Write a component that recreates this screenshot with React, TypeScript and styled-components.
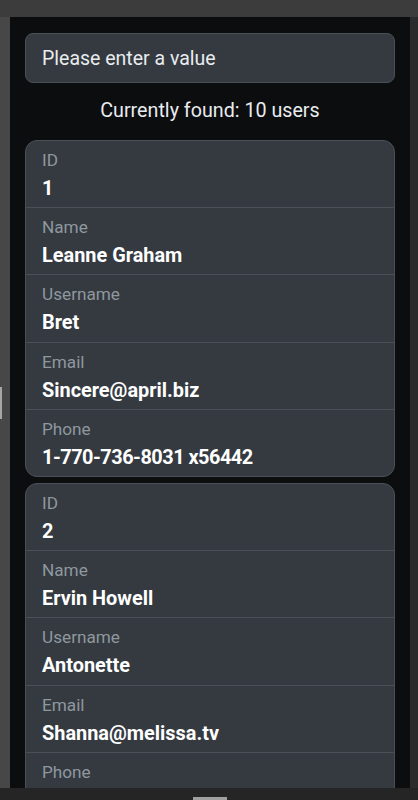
import React from "react";
import styled, { createGlobalStyle } from "styled-components";

const Global = createGlobalStyle`
  html, body { margin: 0; padding: 0; background: #252525; }
  body { font-family: Roboto, "Liberation Sans", sans-serif; }
  * { box-sizing: border-box; }
`;

const Frame = styled.div`
  width: 418px;
  height: 800px;
  display: grid;
  grid-template-rows: 17px 1fr 12px;
  overflow: hidden;
`;

const TopBar = styled.div`
  background: #3c3c3c;
`;

const Middle = styled.div`
  display: grid;
  grid-template-columns: 10px 1fr 8px;
  min-height: 0;
`;

const LeftStrip = styled.div`
  background: #474747;
  position: relative;
`;

const LeftThumb = styled.div`
  position: absolute;
  left: 0;
  top: 370px;
  width: 2px;
  height: 32px;
  background: #a6a6a6;
`;

const RightStrip = styled.div`
  background: #2b2b2b;
`;

const BottomBar = styled.div`
  background: #252525;
  position: relative;
`;

const BottomThumb = styled.div`
  position: absolute;
  left: 193px;
  bottom: 0;
  width: 34px;
  height: 3px;
  background: #a0a0a0;
`;

const Main = styled.main`
  background: #0c0d0f;
  padding: 16px 15px 0;
  overflow: hidden;
  min-height: 0;
`;

const SearchInput = styled.input`
  display: block;
  width: 100%;
  height: 50px;
  padding: 0 16px;
  background: #343a40;
  border: 1px solid #495057;
  border-radius: 8px;
  color: #f1f3f5;
  font-family: Roboto, "Liberation Sans", sans-serif;
  font-size: 19.5px;
  outline: none;
  &::placeholder {
    color: #e9ecef;
    opacity: 1;
  }
`;

const Found = styled.div`
  margin: 13px 0 14px;
  text-align: center;
  color: #e9ecef;
  font-size: 19.7px;
  line-height: 30px;
`;

const CardList = styled.div`
  display: flex;
  flex-direction: column;
  gap: 6px;
`;

const Card = styled.section`
  background: #343a40;
  border: 1px solid #495057;
  border-radius: 12px;
  overflow: hidden;
`;

const Row = styled.div`
  padding: 7px 16px 5.2px;
  border-top: 1px solid #495057;
  &:first-child {
    border-top: none;
  }
`;

const Label = styled.div`
  color: #8f979f;
  font-size: 17.2px;
  line-height: 24px;
`;

const Value = styled.div<{ $numeric?: boolean }>`
  margin-top: 3px;
  color: #ffffff;
  font-size: 19.9px;
  font-weight: 700;
  line-height: 27px;
  letter-spacing: ${(p) => (p.$numeric ? "-0.5px" : "0")};
`;

type User = { id: number; name: string; username: string; email: string; phone: string };

const users: User[] = [
  { id: 1, name: "Leanne Graham", username: "Bret", email: "Sincere@april.biz", phone: "1-770-736-8031 x56442" },
  { id: 2, name: "Ervin Howell", username: "Antonette", email: "Shanna@melissa.tv", phone: "010-692-6593 x09125" },
];

export default function App() {
  return (
    <>
      <Global />
      <Frame>
        <TopBar />
        <Middle>
          <LeftStrip>
            <LeftThumb />
          </LeftStrip>
          <Main>
            <SearchInput placeholder="Please enter a value" />
            <Found>Currently found: 10 users</Found>
            <CardList>
              {users.map((u) => (
                <Card key={u.id}>
                  <Row>
                    <Label>ID</Label>
                    <Value>{u.id}</Value>
                  </Row>
                  <Row>
                    <Label>Name</Label>
                    <Value>{u.name}</Value>
                  </Row>
                  <Row>
                    <Label>Username</Label>
                    <Value>{u.username}</Value>
                  </Row>
                  <Row>
                    <Label>Email</Label>
                    <Value>{u.email}</Value>
                  </Row>
                  <Row>
                    <Label>Phone</Label>
                    <Value $numeric>{u.phone}</Value>
                  </Row>
                </Card>
              ))}
            </CardList>
          </Main>
          <RightStrip />
        </Middle>
        <BottomBar>
          <BottomThumb />
        </BottomBar>
      </Frame>
    </>
  );
}
